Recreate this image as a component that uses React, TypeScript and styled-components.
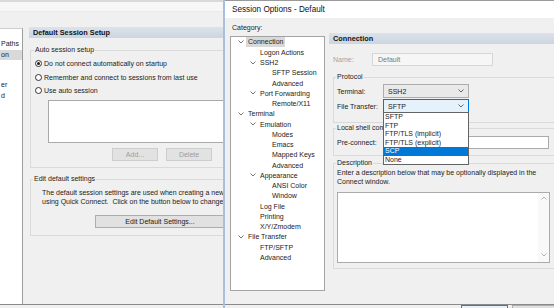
import React from 'react';
import styled, { createGlobalStyle } from 'styled-components';

// --- Global ---
const GlobalStyle = createGlobalStyle`
  html, body { margin: 0; padding: 0; width: 554px; height: 308px; overflow: hidden; background: #f0f0f0; }
  body { font-family: "Liberation Sans", Arial, sans-serif; font-size: 7px; color: #1b1b1b; }
  * { box-sizing: border-box; }
`;

const Screen = styled.div`
  display: flex; width: 554px; height: 308px; overflow: hidden;
`;

// --- Shared bits ---
const PanelHeader = styled.div`
  height: 11px; line-height: 11px; padding-left: 4px; width: 240px; flex: none;
  font-weight: bold; font-size: 7.3px; color: #111; white-space: nowrap;
  background: linear-gradient(#dbe2eb, #ccd5e0);
`;
const GroupBox = styled.fieldset<{ $top: number; $left: number; $width: number }>`
  margin: ${({ $top }) => $top}px 0 0 ${({ $left }) => $left}px;
  padding: 0; min-width: 0; width: ${({ $width }) => $width}px; flex: none;
  border: 1px solid #dadada;
`;
const GroupLegend = styled.legend<{ $indent: number }>`
  margin-left: ${({ $indent }) => $indent}px; padding: 0 1px;
  height: 8px; line-height: 8px; white-space: nowrap;
`;
const GroupInner = styled.div<{ $pad: string }>`
  padding: ${({ $pad }) => $pad};
  display: flex; flex-direction: column;
`;
const PushButton = styled.div<{ $width: number; $disabled?: boolean }>`
  width: ${({ $width }) => $width}px; height: 13px; flex: none;
  display: flex; align-items: center; justify-content: center; white-space: nowrap;
  background: ${({ $disabled }) => ($disabled ? '#e2e2e2' : '#e1e1e1')};
  border: 1px solid ${({ $disabled }) => ($disabled ? '#cdcdcd' : '#adadad')};
  color: ${({ $disabled }) => ($disabled ? '#9d9d9d' : '#1b1b1b')};
`;

// --- Back window ---
const BackWindow = styled.div`
  width: 223px; flex: none; display: flex; flex-direction: column; overflow: hidden;
`;
const BackTopBar = styled.div`
  height: 12px; flex: none;
  background: linear-gradient(#d9d9d9 0 2px, #f7f7f7 2px 11px, #ebebeb 11px);
`;
const BackBody = styled.div`
  flex: 1; display: flex; min-height: 0;
`;
const NavPane = styled.div`
  width: 23px; flex: none; margin-top: 16px; overflow: hidden;
  background: #fff; border-top: 1px solid #cfcfcf; border-right: 1px solid #9c9c9c;
`;
const NavRow = styled.div<{ $selected?: boolean }>`
  height: 10.25px; line-height: 10.25px; padding-left: 1px; white-space: nowrap;
  background: ${({ $selected }) => ($selected ? '#d9d9d9' : 'transparent')};
`;
const SetupPanel = styled.div`
  margin: 15px 0 0 6px; width: 210px; flex: none; display: flex; flex-direction: column;
`;
const RadioRow = styled.div`
  height: 13.5px; display: flex; align-items: center; gap: 2px; white-space: nowrap;
`;
const RadioDot = styled.span<{ $checked?: boolean }>`
  width: 7px; height: 7px; flex: none; border-radius: 50%;
  border: 1px solid #333; background: #fff;
  display: flex; align-items: center; justify-content: center;
  &::after {
    content: ''; width: 3px; height: 3px; border-radius: 50%;
    background: ${({ $checked }) => ($checked ? '#1b1b1b' : 'transparent')};
  }
`;
const ListBox = styled.div`
  margin: 2.5px 0 0 13px; width: 190px; height: 43px; flex: none;
  background: #fff; border: 1px solid #a9a9a9;
`;
const ButtonRow = styled.div<{ $indent: number; $top: number }>`
  display: flex; gap: 8px; margin-top: ${({ $top }) => $top}px; padding-left: ${({ $indent }) => $indent}px;
`;
const HelpLine = styled.div`
  height: 9px; line-height: 9px; white-space: pre;
`;

// --- Dialog ---
const Dialog = styled.div`
  flex: 1; display: flex; flex-direction: column; overflow: hidden; min-width: 0;
  background: #f0f0f0; border-left: 2px solid #a9c0dc;
`;
const TitleBar = styled.div`
  height: 18px; flex: none; padding-left: 7px; line-height: 17px;
  font-size: 8.2px; color: #111; white-space: nowrap;
  background: #fff; border-top: 1px solid #9a9a9a;
`;
const DialogBody = styled.div`
  flex: 1; display: flex; min-height: 0;
`;
const CategoryColumn = styled.div`
  width: 101px; flex: none; padding: 4.5px 0 0 5px; display: flex; flex-direction: column;
`;
const CategoryLabel = styled.div`
  height: 9px; line-height: 9px; padding-left: 2px;
`;
const TreeBox = styled.div`
  margin-top: 4.5px; width: 95px; height: 255px; flex: none;
  background: #fff; border: 1px solid #a3a3a3;
`;
const TreeRow = styled.div<{ $level: number }>`
  height: 10.25px; display: flex; align-items: center; white-space: nowrap;
  padding-left: ${({ $level }) => 5 + $level * 12}px;
`;
const ChevronSlot = styled.span`
  width: 12px; flex: none; display: flex; align-items: center; padding-left: 2px;
`;
const TreeLabel = styled.span<{ $selected?: boolean }>`
  margin-left: -2px; padding: 0 2px;
  line-height: ${({ $selected }) => ($selected ? 10 : 9)}px;
  background: ${({ $selected }) => ($selected ? '#d9d9d9' : 'transparent')};
`;
const OptionsPanel = styled.div`
  flex: 1; min-width: 0; overflow: hidden; padding: 15px 0 0 3px;
  display: flex; flex-direction: column;
`;
const FieldRow = styled.div<{ $height: number; $top?: number; $indent?: number }>`
  height: ${({ $height }) => $height}px; flex: none; display: flex; align-items: center;
  margin-top: ${({ $top }) => $top ?? 0}px; padding-left: ${({ $indent }) => $indent ?? 0}px;
  white-space: nowrap;
`;
const FieldLabel = styled.span<{ $width: number; $disabled?: boolean }>`
  width: ${({ $width }) => $width}px; flex: none;
  color: ${({ $disabled }) => ($disabled ? '#a3a3a3' : '#1b1b1b')};
`;
const TextInput = styled.div<{ $width: number; $height: number; $disabled?: boolean }>`
  width: ${({ $width }) => $width}px; height: ${({ $height }) => $height}px; flex: none;
  padding-left: 5px; display: flex; align-items: center;
  background: ${({ $disabled }) => ($disabled ? '#f6f6f6' : '#fff')};
  border: 1px solid ${({ $disabled }) => ($disabled ? '#d6d6d6' : '#ababab')};
  color: #7a7a7a;
`;
const SelectBox = styled.div<{ $focused?: boolean }>`
  position: relative; width: 86px; height: 14px; flex: none;
  display: flex; align-items: center; justify-content: space-between; padding: 0 4px 0 4px;
  background: ${({ $focused }) => ($focused ? '#e5f1fb' : '#e9e9e9')};
  border: 1px solid ${({ $focused }) => ($focused ? '#0078d7' : '#adadad')};
`;
const DropList = styled.div`
  position: absolute; top: 100%; left: -1px; width: 86px; z-index: 2;
  background: #fff; border: 1px solid #646464;
`;
const DropItem = styled.div<{ $active?: boolean }>`
  height: 8.5px; line-height: 8.5px; padding-left: 1px;
  background: ${({ $active }) => ($active ? '#0078d7' : 'transparent')};
  color: ${({ $active }) => ($active ? '#fff' : '#1b1b1b')};
`;
const DescArea = styled.div`
  margin-top: 6.5px; width: 213px; height: 71px; flex: none; display: flex;
  background: #fff; border: 1px solid #ababab;
`;
const ScrollTrack = styled.div`
  margin-left: auto; width: 11px; flex: none; background: #f9f9f9;
  display: flex; flex-direction: column; align-items: center; justify-content: space-between;
  padding: 3px 0 5px;
`;
const Footer = styled.div<{ $indent: number }>`
  height: 4px; flex: none; display: flex; gap: 4px; padding-left: ${({ $indent }) => $indent}px;
  border-top: 1px solid #8a8a8a; overflow: hidden;
`;
const FooterButton = styled.div<{ $primary?: boolean; $width: number }>`
  width: ${({ $width }) => $width}px; height: 8px; flex: none;
  background: ${({ $primary }) => ($primary ? '#e5f1fb' : '#e1e1e1')};
  border: 1px solid ${({ $primary }) => ($primary ? '#2b7fd0' : '#adadad')};
`;

// --- Icons ---
const Chevron = ({ up = false, color = '#666' }: { up?: boolean; color?: string }) => (
  <svg width="6" height="4" viewBox="0 0 6 4">
    <polyline points={up ? '0.5,3.5 3,1 5.5,3.5' : '0.5,0.5 3,3 5.5,0.5'} fill="none" stroke={color} strokeWidth="0.9" />
  </svg>
);

// --- Data ---
interface TreeItem { label: string; level: number; open?: boolean; selected?: boolean; }
const treeItems: TreeItem[] = [
  { label: 'Connection', level: 0, open: true, selected: true },
  { label: 'Logon Actions', level: 1 },
  { label: 'SSH2', level: 1, open: true },
  { label: 'SFTP Session', level: 2 },
  { label: 'Advanced', level: 2 },
  { label: 'Port Forwarding', level: 1, open: true },
  { label: 'Remote/X11', level: 2 },
  { label: 'Terminal', level: 0, open: true },
  { label: 'Emulation', level: 1, open: true },
  { label: 'Modes', level: 2 },
  { label: 'Emacs', level: 2 },
  { label: 'Mapped Keys', level: 2 },
  { label: 'Advanced', level: 2 },
  { label: 'Appearance', level: 1, open: true },
  { label: 'ANSI Color', level: 2 },
  { label: 'Window', level: 2 },
  { label: 'Log File', level: 1 },
  { label: 'Printing', level: 1 },
  { label: 'X/Y/Zmodem', level: 1 },
  { label: 'File Transfer', level: 0, open: true },
  { label: 'FTP/SFTP', level: 1 },
  { label: 'Advanced', level: 1 },
];
const navRows = ['', 'Paths', 'on', '', '', 'er', 'd'];
const protocols = ['SFTP', 'FTP', 'FTP/TLS (implicit)', 'FTP/TLS (explicit)', 'SCP', 'None'];
const radios = [
  { label: 'Do not connect automatically on startup', checked: true },
  { label: 'Remember and connect to sessions from last use' },
  { label: 'Use auto session' },
];

const App = () => (
  <Screen>
    <GlobalStyle />
    <BackWindow>
      <BackTopBar />
      <BackBody>
        <NavPane>
          {navRows.map((t, i) => <NavRow key={i} $selected={i === 2}>{t}</NavRow>)}
        </NavPane>
        <SetupPanel>
          <PanelHeader>Default Session Setup</PanelHeader>
          <GroupBox $top={8} $left={1} $width={200}>
            <GroupLegend $indent={3}>Auto session setup</GroupLegend>
            <GroupInner $pad="3px 0 6px 4px">
              {radios.map(r => (
                <RadioRow key={r.label}><RadioDot $checked={r.checked} />{r.label}</RadioRow>
              ))}
              <ListBox />
              <ButtonRow $indent={77} $top={5}>
                <PushButton $width={46} $disabled>Add...</PushButton>
                <PushButton $width={46} $disabled>Delete</PushButton>
              </ButtonRow>
            </GroupInner>
          </GroupBox>
          <GroupBox $top={7} $left={1} $width={200}>
            <GroupLegend $indent={2}>Edit default settings</GroupLegend>
            <GroupInner $pad="4.5px 0 7px 11px">
              <HelpLine>The default session settings are used when creating a new session or</HelpLine>
              <HelpLine>{'using Quick Connect.  Click on the button below to change these settings.'}</HelpLine>
              <ButtonRow $indent={53} $top={9.5}>
                <PushButton $width={130}>Edit Default Settings...</PushButton>
              </ButtonRow>
            </GroupInner>
          </GroupBox>
        </SetupPanel>
      </BackBody>
      <Footer $indent={0} />
    </BackWindow>

    <Dialog>
      <TitleBar>Session Options - Default</TitleBar>
      <DialogBody>
        <CategoryColumn>
          <CategoryLabel>Category:</CategoryLabel>
          <TreeBox>
            {treeItems.map((item, i) => (
              <TreeRow key={i} $level={item.level}>
                <ChevronSlot>{item.open && <Chevron />}</ChevronSlot>
                <TreeLabel $selected={item.selected}>{item.label}</TreeLabel>
              </TreeRow>
            ))}
          </TreeBox>
        </CategoryColumn>
        <OptionsPanel>
          <PanelHeader>Connection</PanelHeader>
          <FieldRow $height={13} $top={9} $indent={4}>
            <FieldLabel $width={39} $disabled>Name:</FieldLabel>
            <TextInput $width={121} $height={13} $disabled>Default</TextInput>
          </FieldRow>
          <GroupBox $top={7} $left={4} $width={225}>
            <GroupLegend $indent={2}>Protocol</GroupLegend>
            <GroupInner $pad="3px 0 9px 3px">
              <FieldRow $height={14}>
                <FieldLabel $width={46}>Terminal:</FieldLabel>
                <SelectBox>SSH2<Chevron color="#555" /></SelectBox>
              </FieldRow>
              <FieldRow $height={14} $top={1}>
                <FieldLabel $width={46}>File Transfer:</FieldLabel>
                <SelectBox $focused>
                  SFTP<Chevron color="#555" />
                  <DropList>
                    {protocols.map(p => <DropItem key={p} $active={p === 'SCP'}>{p}</DropItem>)}
                  </DropList>
                </SelectBox>
              </FieldRow>
            </GroupInner>
          </GroupBox>
          <GroupBox $top={1} $left={4} $width={225}>
            <GroupLegend $indent={2}>Local shell command</GroupLegend>
            <GroupInner $pad="4px 0 6px 3px">
              <FieldRow $height={13}>
                <FieldLabel $width={46}>Pre-connect:</FieldLabel>
                <TextInput $width={166} $height={13} />
              </FieldRow>
            </GroupInner>
          </GroupBox>
          <GroupBox $top={3} $left={4} $width={225}>
            <GroupLegend $indent={2}>Description</GroupLegend>
            <GroupInner $pad="0.5px 0 5px 3px">
              <HelpLine>Enter a description below that may be optionally displayed in the</HelpLine>
              <HelpLine>Connect window.</HelpLine>
              <DescArea>
                <ScrollTrack>
                  <Chevron up color="#a8a8a8" />
                  <Chevron color="#a8a8a8" />
                </ScrollTrack>
              </DescArea>
            </GroupInner>
          </GroupBox>
        </OptionsPanel>
      </DialogBody>
      <Footer $indent={236}>
        <FooterButton $primary $width={47} />
        <FooterButton $width={50} />
      </Footer>
    </Dialog>
  </Screen>
);

export default App;
